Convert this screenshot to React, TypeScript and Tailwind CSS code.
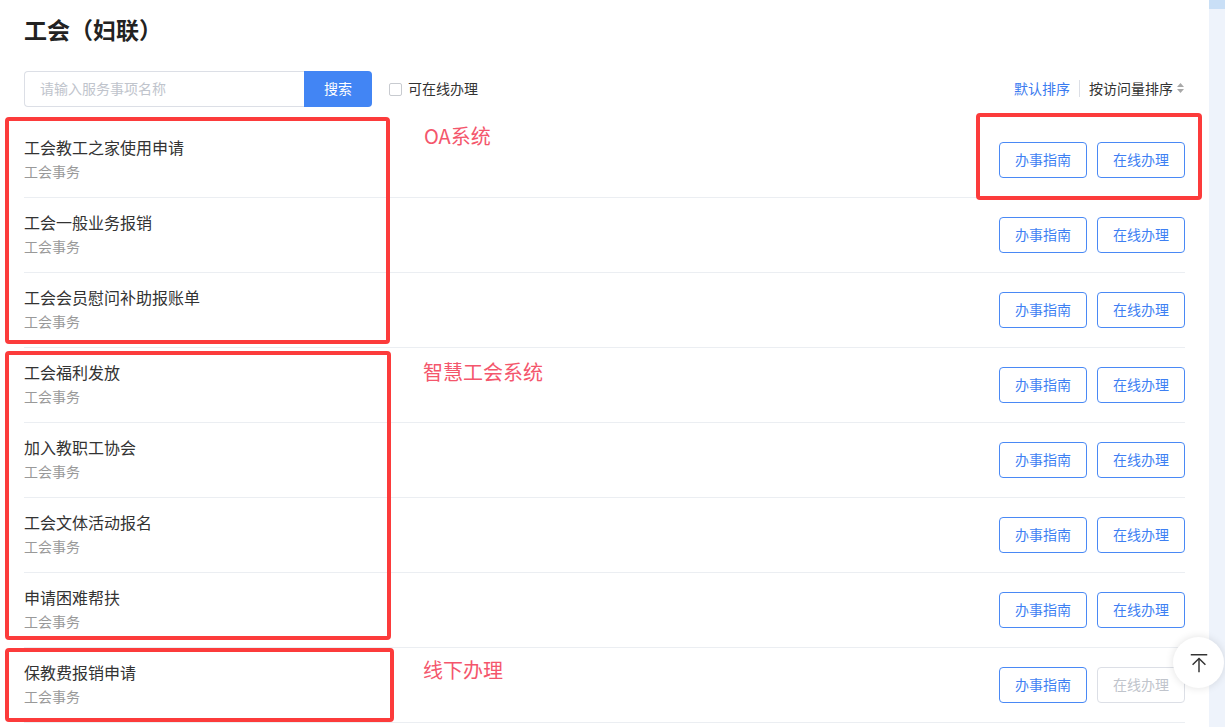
import React from "react";

const rows: { title: string; online: boolean }[] = [
  { title: "工会教工之家使用申请", online: true },
  { title: "工会一般业务报销", online: true },
  { title: "工会会员慰问补助报账单", online: true },
  { title: "工会福利发放", online: true },
  { title: "加入教职工协会", online: true },
  { title: "工会文体活动报名", online: true },
  { title: "申请困难帮扶", online: true },
  { title: "保教费报销申请", online: false },
];

const font = { fontFamily: '"Noto Sans CJK SC", "Noto Sans", sans-serif' };

function Row({ title, online }: { title: string; online: boolean }) {
  return (
    <div className="flex h-[75px] items-center justify-between border-b border-[#ebeef2]">
      <div className="flex flex-col pb-[4px]">
        <div className="text-[16px] leading-[24px] text-[#333333]">{title}</div>
        <div className="mt-[2px] text-[14px] leading-[20px] text-[#999999]">工会事务</div>
      </div>
      <div className="flex gap-[10px]">
        <button className="h-[36px] w-[88px] rounded-[4px] border border-[#4a89f5] bg-white pb-[2px] text-[14px] text-[#3e7ff3]">
          办事指南
        </button>
        {online ? (
          <button className="h-[36px] w-[88px] rounded-[4px] border border-[#4a89f5] bg-white pb-[2px] text-[14px] text-[#3e7ff3]">
            在线办理
          </button>
        ) : (
          <button className="h-[36px] w-[88px] rounded-[4px] border border-[#dcdfe6] bg-white pb-[2px] text-[14px] text-[#c0c4cc]">
            在线办理
          </button>
        )}
      </div>
    </div>
  );
}

export default function App() {
  return (
    <div className="relative flex h-[727px] w-[1225px] overflow-hidden bg-white" style={font}>
      <div className="flex-1 px-[24px]">
        <div className="mt-[13px] h-[32px] text-[23px] font-bold leading-[32px] text-[#222222]">
          工会（妇联）
        </div>
        <div className="mt-[26px] flex h-[36px] items-center justify-between">
          <div className="flex items-center">
            <div className="flex h-[36px] w-[280px] items-center rounded-l-[4px] border border-r-0 border-[#dcdfe6] px-[15px] pb-[2px] text-[14px] text-[#c0c4cc]">
              请输入服务事项名称
            </div>
            <button className="h-[36px] w-[68px] rounded-r-[4px] bg-[#4285f4] pb-[2px] text-[14px] text-white">
              搜索
            </button>
            <div className="ml-[17px] h-[13px] w-[13px] rounded-[2px] border border-[#c8cbd0] bg-white" />
            <span className="ml-[6px] pb-[2px] text-[14px] text-[#333333]">可在线办理</span>
          </div>
          <div className="flex items-center pb-[2px] text-[14px]">
            <span className="text-[#3a7bf0]">默认排序</span>
            <span className="mx-[9px] h-[17px] w-px bg-[#dcdfe6]" />
            <span className="text-[#333333]">按访问量排序</span>
            <svg width="9" height="12" viewBox="0 0 9 12" className="ml-[3px]">
              <path d="M4.5 1 L8 5 H1 Z" fill="#a8a8a8" />
              <path d="M4.5 11 L8 7 H1 Z" fill="#a8a8a8" />
            </svg>
          </div>
        </div>
        <div className="mt-[16px]">
          {rows.map((r) => (
            <Row key={r.title} title={r.title} online={r.online} />
          ))}
        </div>
      </div>
      <div className="flex w-[16px] flex-col bg-[#eef3fb]">
        <div className="h-[9px] bg-[#c9dff6]" />
      </div>

      {/* annotation overlays */}
      <div className="absolute left-[5px] top-[117px] h-[227px] w-[385px] rounded-[4px] border-[4px] border-[#fc3b3b]" />
      <div className="absolute left-[5px] top-[351px] h-[289px] w-[386px] rounded-[4px] border-[4px] border-[#fc3b3b]" />
      <div className="absolute left-[5px] top-[648px] h-[74px] w-[389px] rounded-[4px] border-[4px] border-[#fc3b3b]" />
      <div className="absolute left-[976px] top-[113px] h-[87px] w-[226px] rounded-[4px] border-[4px] border-[#fc3b3b]" />
      <div className="absolute left-[424px] top-[122px] text-[20px] leading-[28px] text-[#f4566c]">OA系统</div>
      <div className="absolute left-[423px] top-[358px] text-[20px] leading-[28px] text-[#f4566c]">智慧工会系统</div>
      <div className="absolute left-[423px] top-[656px] text-[20px] leading-[28px] text-[#f4566c]">线下办理</div>

      {/* back to top */}
      <div className="absolute left-[1173px] top-[637px] flex h-[51px] w-[51px] items-center justify-center rounded-full bg-white shadow-[0_0_8px_rgba(0,0,0,0.12)]">
        <svg width="22" height="22" viewBox="0 0 24 24" fill="none" stroke="#333" strokeWidth="1.6">
          <path d="M3 3 H21" />
          <path d="M12 7 V22" />
          <path d="M5 14 L12 7 L19 14" />
        </svg>
      </div>
    </div>
  );
}
